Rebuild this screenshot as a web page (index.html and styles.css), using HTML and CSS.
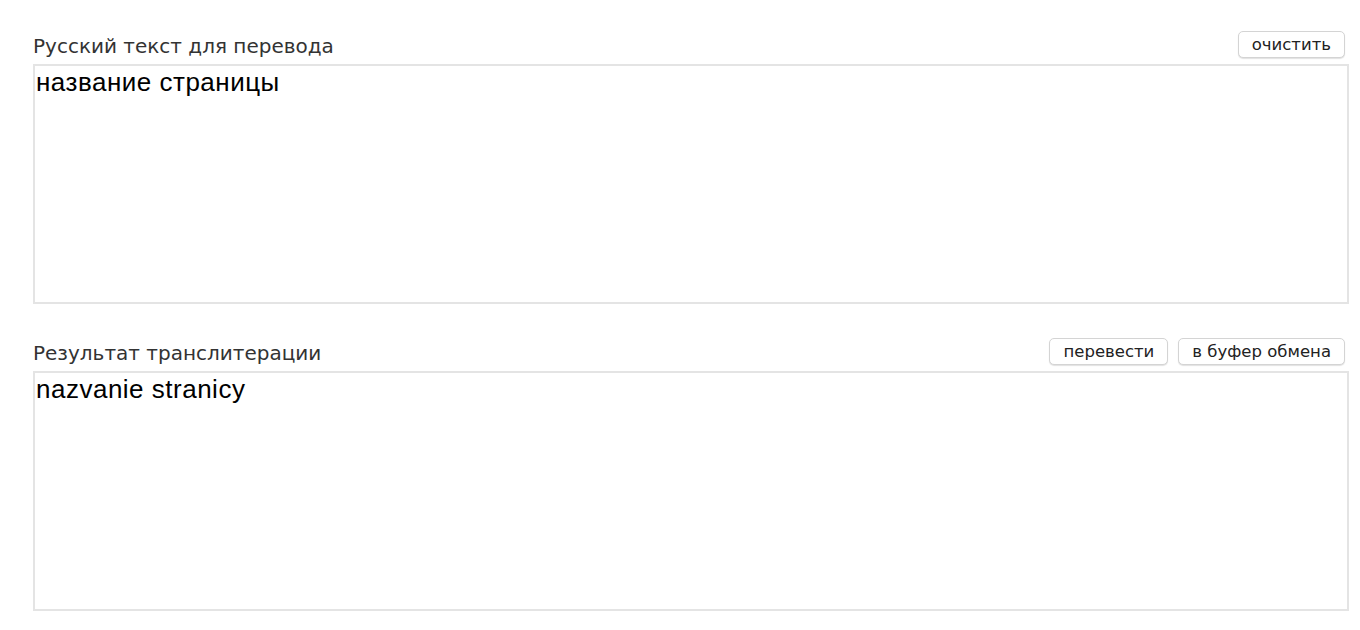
FILE: index.html
```html
<!DOCTYPE html>
<html lang="ru">
<head>
<meta charset="utf-8">
<title>Транслитерация</title>
<link rel="stylesheet" href="styles.css">
</head>
<body>
<main class="page">
  <section class="block">
    <div class="head">
      <label class="label" for="src">Русский текст для перевода</label>
      <div class="actions">
        <button class="btn" type="button">очистить</button>
      </div>
    </div>
    <textarea id="src" class="area">название страницы</textarea>
  </section>
  <section class="block">
    <div class="head">
      <label class="label" for="dst">Результат транслитерации</label>
      <div class="actions">
        <button class="btn" type="button">перевести</button>
        <button class="btn" type="button">в буфер обмена</button>
      </div>
    </div>
    <textarea id="dst" class="area">nazvanie stranicy</textarea>
  </section>
</main>
</body>
</html>
```

FILE: styles.css
```css
* { box-sizing: border-box; }
html, body { margin: 0; background: #fff; }
.page {
  padding: 30px 11px 0 33px;
  display: flex;
  flex-direction: column;
  gap: 33px;
}
.block { display: flex; flex-direction: column; gap: 5px; }
.head {
  display: flex;
  align-items: center;
  justify-content: space-between;
  height: 29px;
}
.label {
  font-family: "DejaVu Sans", sans-serif;
  font-size: 20px;
  color: #333;
  padding-top: 2px;
}
.actions { display: flex; gap: 10px; padding-right: 4px; }
.btn {
  font-family: "DejaVu Sans", sans-serif;
  font-size: 16.5px;
  color: #222;
  background: #fff;
  border: 1px solid #d4d4d4;
  border-radius: 5px;
  box-shadow: 0 1px 1px rgba(0,0,0,0.12);
  height: 27px;
  padding: 0 13px;
  line-height: 25px;
}
.area {
  display: block;
  width: 100%;
  height: 240px;
  border: 2px solid #e4e4e4;
  padding: 1px 0 0 1px;
  font-family: "Liberation Sans", Arial, sans-serif;
  font-size: 26px;
  letter-spacing: 0.5px;
  color: #000;
  resize: none;
  outline: none;
  margin: 0;
}
```
